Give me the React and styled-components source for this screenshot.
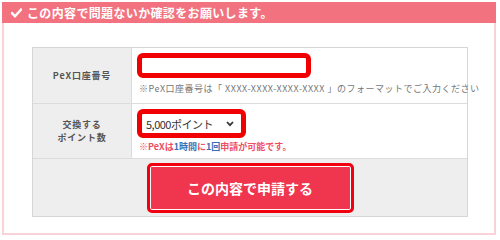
import React from "react";
import styled, { createGlobalStyle } from "styled-components";

const Global = createGlobalStyle`
  html, body { margin: 0; padding: 0; background: #fff; }
  body { font-family: "Noto Sans CJK JP", "Noto Sans", sans-serif; }
  * { box-sizing: border-box; }
`;

const Wrap = styled.div`
  margin: 2px 4px 0 2px;
  width: 494px;
`;

const Header = styled.div`
  height: 21px;
  background: #f2737f;
  color: #fff;
  font-size: 12px;
  font-weight: 700;
  letter-spacing: 0.35px;
  display: flex;
  align-items: center;
  gap: 5px;
  padding-left: 9px;
  line-height: 1;
`;

const Box = styled.div`
  border: 2px solid #f9d3d9;
  border-top: none;
  padding: 24px 26px 16px 28px;
`;

const Table = styled.div`
  display: grid;
  grid-template-columns: 99px minmax(0, 1fr);
  border: 1px solid #d6d6d6;
  width: 436px;
`;

const Label = styled.div`
  background: #eeeeee;
  border-right: 1px solid #dcdcdc;
  border-bottom: 1px solid #dcdcdc;
  height: ${(p) => p.$h}px;
  display: flex;
  align-items: center;
  justify-content: center;
  text-align: center;
  font-size: 9px;
  font-weight: 700;
  letter-spacing: 0.8px;
  color: #555;
  line-height: 13px;
`;

const Value = styled.div`
  border-bottom: 1px solid #dcdcdc;
  height: ${(p) => p.$h}px;
  min-width: 0;
  padding: ${(p) => p.$pt}px 0 0 5px;
  display: flex;
  flex-direction: column;
  align-items: flex-start;
`;

const RedFrame = styled.div`
  border: 5px solid #f00000;
  border-radius: 6px;
  width: ${(p) => p.$w}px;
  height: ${(p) => p.$h}px;
  background: #fff;
  display: flex;
  align-items: center;
`;

const SelectBox = styled.div`
  flex: 1;
  height: 100%;
  display: flex;
  align-items: center;
  justify-content: space-between;
  padding: 0 7px 0 4px;
  font-family: "Noto Sans CJK JP", sans-serif;
  font-size: 11px;
  letter-spacing: -0.5px;
  color: #333;
`;

const Hint = styled.div`
  margin-top: ${(p) => p.$mt}px;
  margin-left: 2px;
  font-size: 9px;
  color: #777;
  white-space: nowrap;
  letter-spacing: 0.5px;
  line-height: 12px;
`;

const Alert = styled.div`
  margin-top: 3px;
  margin-left: 2px;
  font-size: 9px;
  font-weight: 700;
  color: #ee4d62;
  white-space: nowrap;
  line-height: 12px;
`;

const Blue = styled.span`
  color: #3a6fb7;
`;

const ButtonRow = styled.div`
  grid-column: 1 / span 2;
  background: #eeeeee;
  height: 57px;
  display: flex;
  align-items: center;
  justify-content: center;
`;

const Button = styled.button`
  width: 207px;
  height: 50px;
  border: 3px solid #f20010;
  border-radius: 5px;
  background: #f0364e;
  box-shadow: inset 0 0 0 1px #fff;
  color: #fff;
  font-family: "Noto Sans CJK JP", sans-serif;
  font-size: 14px;
  font-weight: 700;
  padding: 0;
  cursor: pointer;
`;

const Check = () => (
  <svg width="11" height="10" viewBox="0 0 11 10">
    <path d="M1 5.2 L4 8.2 L10 1.6" stroke="#fff" strokeWidth="2.4" fill="none" strokeLinecap="square" />
  </svg>
);

const Chevron = () => (
  <svg width="8" height="6" viewBox="0 0 8 6">
    <path d="M1 1 L4 4.2 L7 1" stroke="#333" strokeWidth="1.8" fill="none" />
  </svg>
);

export default function App() {
  return (
    <>
      <Global />
      <Wrap>
        <Header>
          <Check />
          <span>この内容で問題ないか確認をお願いします。</span>
        </Header>
        <Box>
          <Table>
            <Label $h={56}>PeX口座番号</Label>
            <Value $h={56} $pt={5}>
              <RedFrame $w={174} $h={25} />
              <Hint $mt={5}>※PeX口座番号は「 XXXX-XXXX-XXXX-XXXX 」のフォーマットでご入力ください</Hint>
            </Value>
            <Label $h={55}>
              交換する
              <br />
              ポイント数
            </Label>
            <Value $h={55} $pt={5}>
              <RedFrame $w={109} $h={29}>
                <SelectBox>
                  <span>5,000ポイント</span>
                  <Chevron />
                </SelectBox>
              </RedFrame>
              <Alert>
                ※PeXは<Blue>1時間</Blue>に<Blue>1回</Blue>申請が可能です。
              </Alert>
            </Value>
            <ButtonRow>
              <Button>この内容で申請する</Button>
            </ButtonRow>
          </Table>
        </Box>
      </Wrap>
    </>
  );
}
